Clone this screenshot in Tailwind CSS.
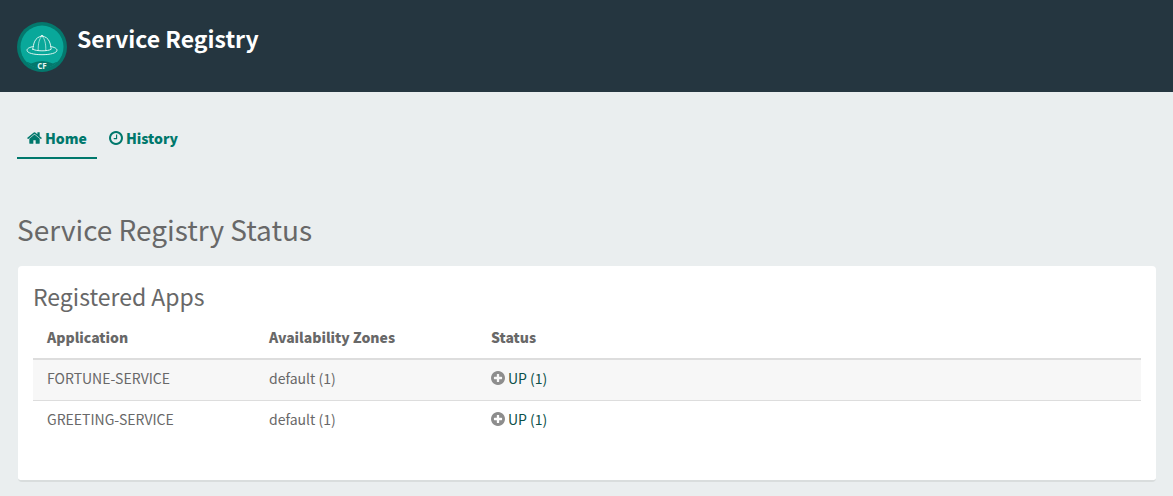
<!DOCTYPE html>
<html lang="en">
<head>
<meta charset="utf-8">
<meta name="viewport" content="width=device-width, initial-scale=1">
<title>Service Registry</title>
<script src="https://cdn.jsdelivr.net/npm/@tailwindcss/browser@4"></script>
</head>
<body class="min-h-screen bg-[#eaeeef] font-['Noto_Sans_CJK_SC',sans-serif] text-[14px] leading-5 text-[#686868]">
<svg class="hidden" aria-hidden="true">
  <symbol id="plus-circle" viewBox="128 128 1536 1536"><path d="M1344 960v-128q0-26-19-45t-45-19h-256v-256q0-26-19-45t-45-19h-128q-26 0-45 19t-19 45v256h-256q-26 0-45 19t-19 45v128q0 26 19 45t45 19h256v256q0 26 19 45t45 19h128q26 0 45-19t19-45v-256h256q26 0 45-19t19-45zm320-64q0 209-103 385.500t-279.500 279.500-385.500 103-385.500-103-279.500-279.500-103-385.500 103-385.500 279.500-279.500 385.500-103 385.500 103 279.500 279.500 103 385.500z"/></symbol>
</svg>
<header class="flex h-[92px] items-start gap-[10px] bg-[#253640] px-[17px] pt-[22px]">
  <svg class="size-[50px] shrink-0" viewBox="0 0 50 50" role="img" aria-label="CF">
    <defs><clipPath id="disc"><circle cx="25" cy="25" r="21.500"/></clipPath></defs>
    <circle cx="25" cy="25" r="25" fill="#04786d"/>
    <circle cx="25" cy="25" r="21.500" fill="#09a89a"/>
    <path d="M3 42Q8 38 14 41.500Q25 36.500 36 41.500Q42 38 47 42V50H3Z" fill="#04786d" clip-path="url(#disc)"/>
    <g fill="none" stroke="#d9f3ee" stroke-width="1" stroke-linecap="round" stroke-linejoin="round">
      <path d="M16.500 24.500C12.500 25.200 10 26.500 10 28.200C10 31 16.500 32.700 25 32.700S40 31 40 28.200C40 26.500 37.500 25.200 33.500 24.500"/>
      <path d="M15.800 27.200C16.500 22 17.500 15 25 14.200C32.500 15 33.500 22 34.200 27.200C31.500 29.400 18.500 29.400 15.800 27.200Z"/>
      <path d="M21.200 28.300C21 22 22.200 16.500 25 14.200C27.800 16.500 29 22 28.800 28.300" stroke-width=".7"/>
      <path d="M23.800 13.800Q25 12.200 26.200 13.800"/>
    </g>
    <text x="25" y="47" text-anchor="middle" font-family="Open Sans, sans-serif" font-size="8" font-weight="700" fill="#e4f5f2">CF</text>
  </svg>
  <div class="text-[23px] font-bold leading-8 text-white">Service Registry</div>
</header>
<nav class="flex px-[17px] pt-7 font-black text-[#00786c]" aria-label="Main">
  <a href="#" aria-current="page" class="flex items-center gap-[3px] border-b-2 border-[#00786c] px-[10px] pt-2 pb-[9px]">
    <svg class="h-[14px] w-[15px]" viewBox="64 128 1664 1536" fill="currentColor" aria-hidden="true"><path d="M1472 992v480q0 26-19 45t-45 19h-384v-384h-256v384h-384q-26 0-45-19t-19-45v-480q0-1 .5-3t.5-3l575-474 575 474q1 2 1 6zm223-69l-62 74q-8 9-21 11h-3q-13 0-21-7l-692-577-692 577q-12 8-24 7-13-2-21-11l-62-74q-8-10-7-23.500t11-21.500l719-599q32-26 76-26t76 26l244 204v-195q0-14 9-23t23-9h192q14 0 23 9t9 23v408l219 182q10 8 11 21.500t-7 23.500z"/></svg>
    <span>Home</span>
  </a>
  <a href="#" class="flex items-center gap-[3px] border-b-2 border-transparent px-3 pt-2 pb-[9px]">
    <svg class="size-[14px]" viewBox="128 128 1536 1536" fill="currentColor" aria-hidden="true"><path d="M1024 544v448q0 14-9 23t-23 9h-320q-14 0-23-9t-9-23v-64q0-14 9-23t23-9h224v-352q0-14 9-23t23-9h64q14 0 23 9t9 23zm416 352q0-148-73-273t-198-198-273-73-273 73-198 198-73 273 73 273 198 198 273 73 273-73 198-198 73-273zm224 0q0 209-103 385.500t-279.500 279.500-385.500 103-385.500-103-279.500-279.500-103-385.500 103-385.500 279.500-279.500 385.500-103 385.500 103 279.500 279.500 103 385.500z"/></svg>
    <span>History</span>
  </a>
</nav>
<main class="px-[17px] pt-[50px] pb-4">
  <h1 class="text-[28px] leading-10">Service Registry Status</h1>
  <section class="mt-[17px] ml-px rounded-[4px] border-b-2 border-[#d9dddd] bg-white px-[15px] pt-[14px] pb-[39px]">
    <h2 class="mb-px text-[23px] leading-8">Registered Apps</h2>
    <table class="w-full table-fixed border-collapse text-left">
      <thead>
        <tr class="h-[46px] border-b-2 border-[#dddddd]">
          <th scope="col" class="w-[222px] px-[14px] pt-[2px] font-black">Application</th>
          <th scope="col" class="w-[222px] px-[14px] pt-[2px] font-black">Availability Zones</th>
          <th scope="col" class="px-[14px] pt-[2px] font-black">Status</th>
        </tr>
      </thead>
      <tbody>
        <tr class="h-[41px] border-b border-[#dddddd] bg-[#f7f7f7]">
          <td class="px-[14px] pb-1">FORTUNE-SERVICE</td>
          <td class="px-[14px] pb-1">default (1)</td>
          <td class="px-[14px] pb-1"><div class="flex items-center gap-[3px]"><svg class="size-[14px] fill-[#8d8d8d]" aria-hidden="true"><use href="#plus-circle"/></svg><a href="#" class="text-[#0b5048]">UP (1)</a></div></td>
        </tr>
        <tr class="h-[41px]">
          <td class="px-[14px] pb-1">GREETING-SERVICE</td>
          <td class="px-[14px] pb-1">default (1)</td>
          <td class="px-[14px] pb-1"><div class="flex items-center gap-[3px]"><svg class="size-[14px] fill-[#8d8d8d]" aria-hidden="true"><use href="#plus-circle"/></svg><a href="#" class="text-[#0b5048]">UP (1)</a></div></td>
        </tr>
      </tbody>
    </table>
  </section>
</main>
</body>
</html>
